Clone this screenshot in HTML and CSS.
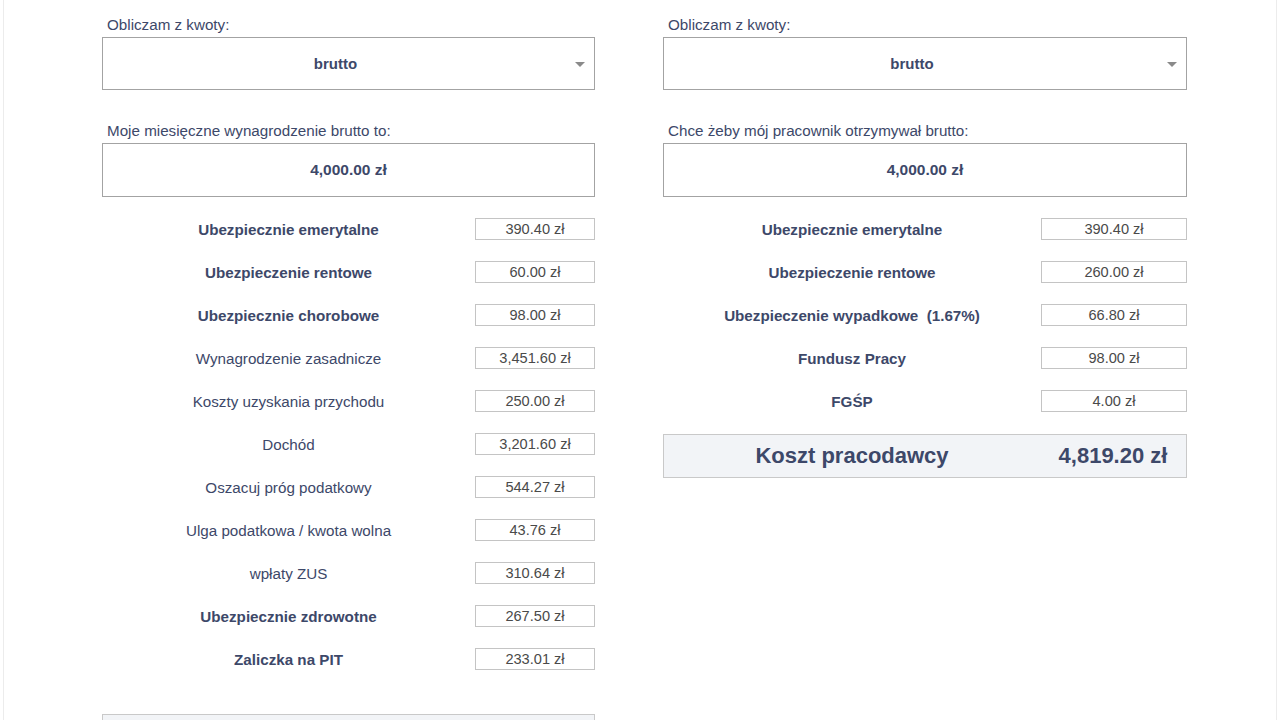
FILE: index.html
```
<!DOCTYPE html>
<html lang="pl">
<head>
<meta charset="utf-8">
<title>Kalkulator wynagrodzeń</title>
<link rel="stylesheet" href="styles.css">
</head>
<body>
<div class="page">
  <div class="columns">
    <section class="col col-left">
      <div class="field">
        <div class="field-label">Obliczam z kwoty:</div>
        <div class="select"><span class="select-text">brutto</span><span class="caret"></span></div>
      </div>
      <div class="field field-second">
        <div class="field-label">Moje miesięczne wynagrodzenie brutto to:</div>
        <div class="amount">4,000.00 zł</div>
      </div>
      <div class="rows">
        <div class="row"><div class="row-label bold">Ubezpiecznie emerytalne</div><div class="row-value">390.40 zł</div></div>
        <div class="row"><div class="row-label bold">Ubezpieczenie rentowe</div><div class="row-value">60.00 zł</div></div>
        <div class="row"><div class="row-label bold">Ubezpiecznie chorobowe</div><div class="row-value">98.00 zł</div></div>
        <div class="row"><div class="row-label">Wynagrodzenie zasadnicze</div><div class="row-value">3,451.60 zł</div></div>
        <div class="row"><div class="row-label">Koszty uzyskania przychodu</div><div class="row-value">250.00 zł</div></div>
        <div class="row"><div class="row-label">Dochód</div><div class="row-value">3,201.60 zł</div></div>
        <div class="row"><div class="row-label">Oszacuj próg podatkowy</div><div class="row-value">544.27 zł</div></div>
        <div class="row"><div class="row-label">Ulga podatkowa / kwota wolna</div><div class="row-value">43.76 zł</div></div>
        <div class="row"><div class="row-label">wpłaty ZUS</div><div class="row-value">310.64 zł</div></div>
        <div class="row"><div class="row-label bold">Ubezpiecznie zdrowotne</div><div class="row-value">267.50 zł</div></div>
        <div class="row"><div class="row-label bold">Zaliczka na PIT</div><div class="row-value">233.01 zł</div></div>
      </div>
      <div class="summary summary-left"></div>
    </section>
    <section class="col col-right">
      <div class="field">
        <div class="field-label">Obliczam z kwoty:</div>
        <div class="select"><span class="select-text">brutto</span><span class="caret"></span></div>
      </div>
      <div class="field field-second">
        <div class="field-label">Chce żeby mój pracownik otrzymywał brutto:</div>
        <div class="amount">4,000.00 zł</div>
      </div>
      <div class="rows">
        <div class="row"><div class="row-label bold">Ubezpiecznie emerytalne</div><div class="row-value">390.40 zł</div></div>
        <div class="row"><div class="row-label bold">Ubezpieczenie rentowe</div><div class="row-value">260.00 zł</div></div>
        <div class="row"><div class="row-label bold">Ubezpieczenie wypadkowe&nbsp; (1.67%)</div><div class="row-value">66.80 zł</div></div>
        <div class="row"><div class="row-label bold">Fundusz Pracy</div><div class="row-value">98.00 zł</div></div>
        <div class="row"><div class="row-label bold">FGŚP</div><div class="row-value">4.00 zł</div></div>
      </div>
      <div class="summary">
        <div class="summary-label">Koszt pracodawcy</div>
        <div class="summary-value">4,819.20 zł</div>
      </div>
    </section>
  </div>
</div>
</body>
</html>
```
FILE: styles.css
```
* { box-sizing: border-box; }

html, body {
  margin: 0;
  padding: 0;
  background: #ffffff;
  height: 720px;
  overflow: hidden;
}

body {
  font-family: "Liberation Sans", Arial, sans-serif;
  color: #3d4869;
}

.page {
  margin: 0 3px;
  height: 720px;
  overflow: hidden;
  border-left: 1px solid #ececec;
  border-right: 1px solid #ececec;
  padding: 16px 0 0 98px;
}

.columns {
  display: flex;
  gap: 68px;
  align-items: flex-start;
}

.col { display: flex; flex-direction: column; }
.col-left { width: 493px; }
.col-right { width: 524px; }

.field-label {
  font-size: 15.2px;
  line-height: 18px;
  padding-left: 5px;
  margin-bottom: 3px;
  color: #3d4869;
}

.field-second { margin-top: 32px; }

.select {
  position: relative;
  height: 53px;
  border: 1px solid #a3a3a3;
  display: flex;
  align-items: center;
  justify-content: center;
  padding-right: 26px;
  font-weight: bold;
  font-size: 15px;
  color: #3d4869;
}

.caret {
  position: absolute;
  right: 9px;
  top: 24px;
  width: 0;
  height: 0;
  border-left: 5px solid transparent;
  border-right: 5px solid transparent;
  border-top: 5px solid #8a8a8a;
}

.amount {
  height: 54px;
  border: 1px solid #a3a3a3;
  display: flex;
  align-items: center;
  justify-content: center;
  font-weight: bold;
  font-size: 15.5px;
  color: #3d4869;
}

.rows {
  margin-top: 21px;
  display: flex;
  flex-direction: column;
  gap: 21px;
}

.row {
  display: flex;
  align-items: center;
  height: 22px;
}

.row-label {
  flex: 1;
  text-align: center;
  font-size: 15.2px;
  color: #3d4869;
  white-space: nowrap;
}

.row-label.bold { font-weight: bold; font-size: 15.2px; }

.row-value {
  width: 120px;
  height: 22px;
  border: 1px solid #c4c4c4;
  display: flex;
  align-items: center;
  justify-content: center;
  font-size: 14.6px;
  color: #4a4a4a;
}

.col-right .row-value { width: 146px; }

.summary {
  margin-top: 22px;
  height: 44px;
  background: #f2f4f7;
  border: 1px solid #c9c9c9;
  display: flex;
  align-items: center;
}

.summary-left { margin-top: 44px; }

.summary-label {
  flex: 1;
  text-align: center;
  font-weight: bold;
  font-size: 22px;
  color: #3d4869;
}

.summary-value {
  width: 146px;
  text-align: center;
  font-weight: bold;
  font-size: 22px;
  color: #3d4869;
}
```
